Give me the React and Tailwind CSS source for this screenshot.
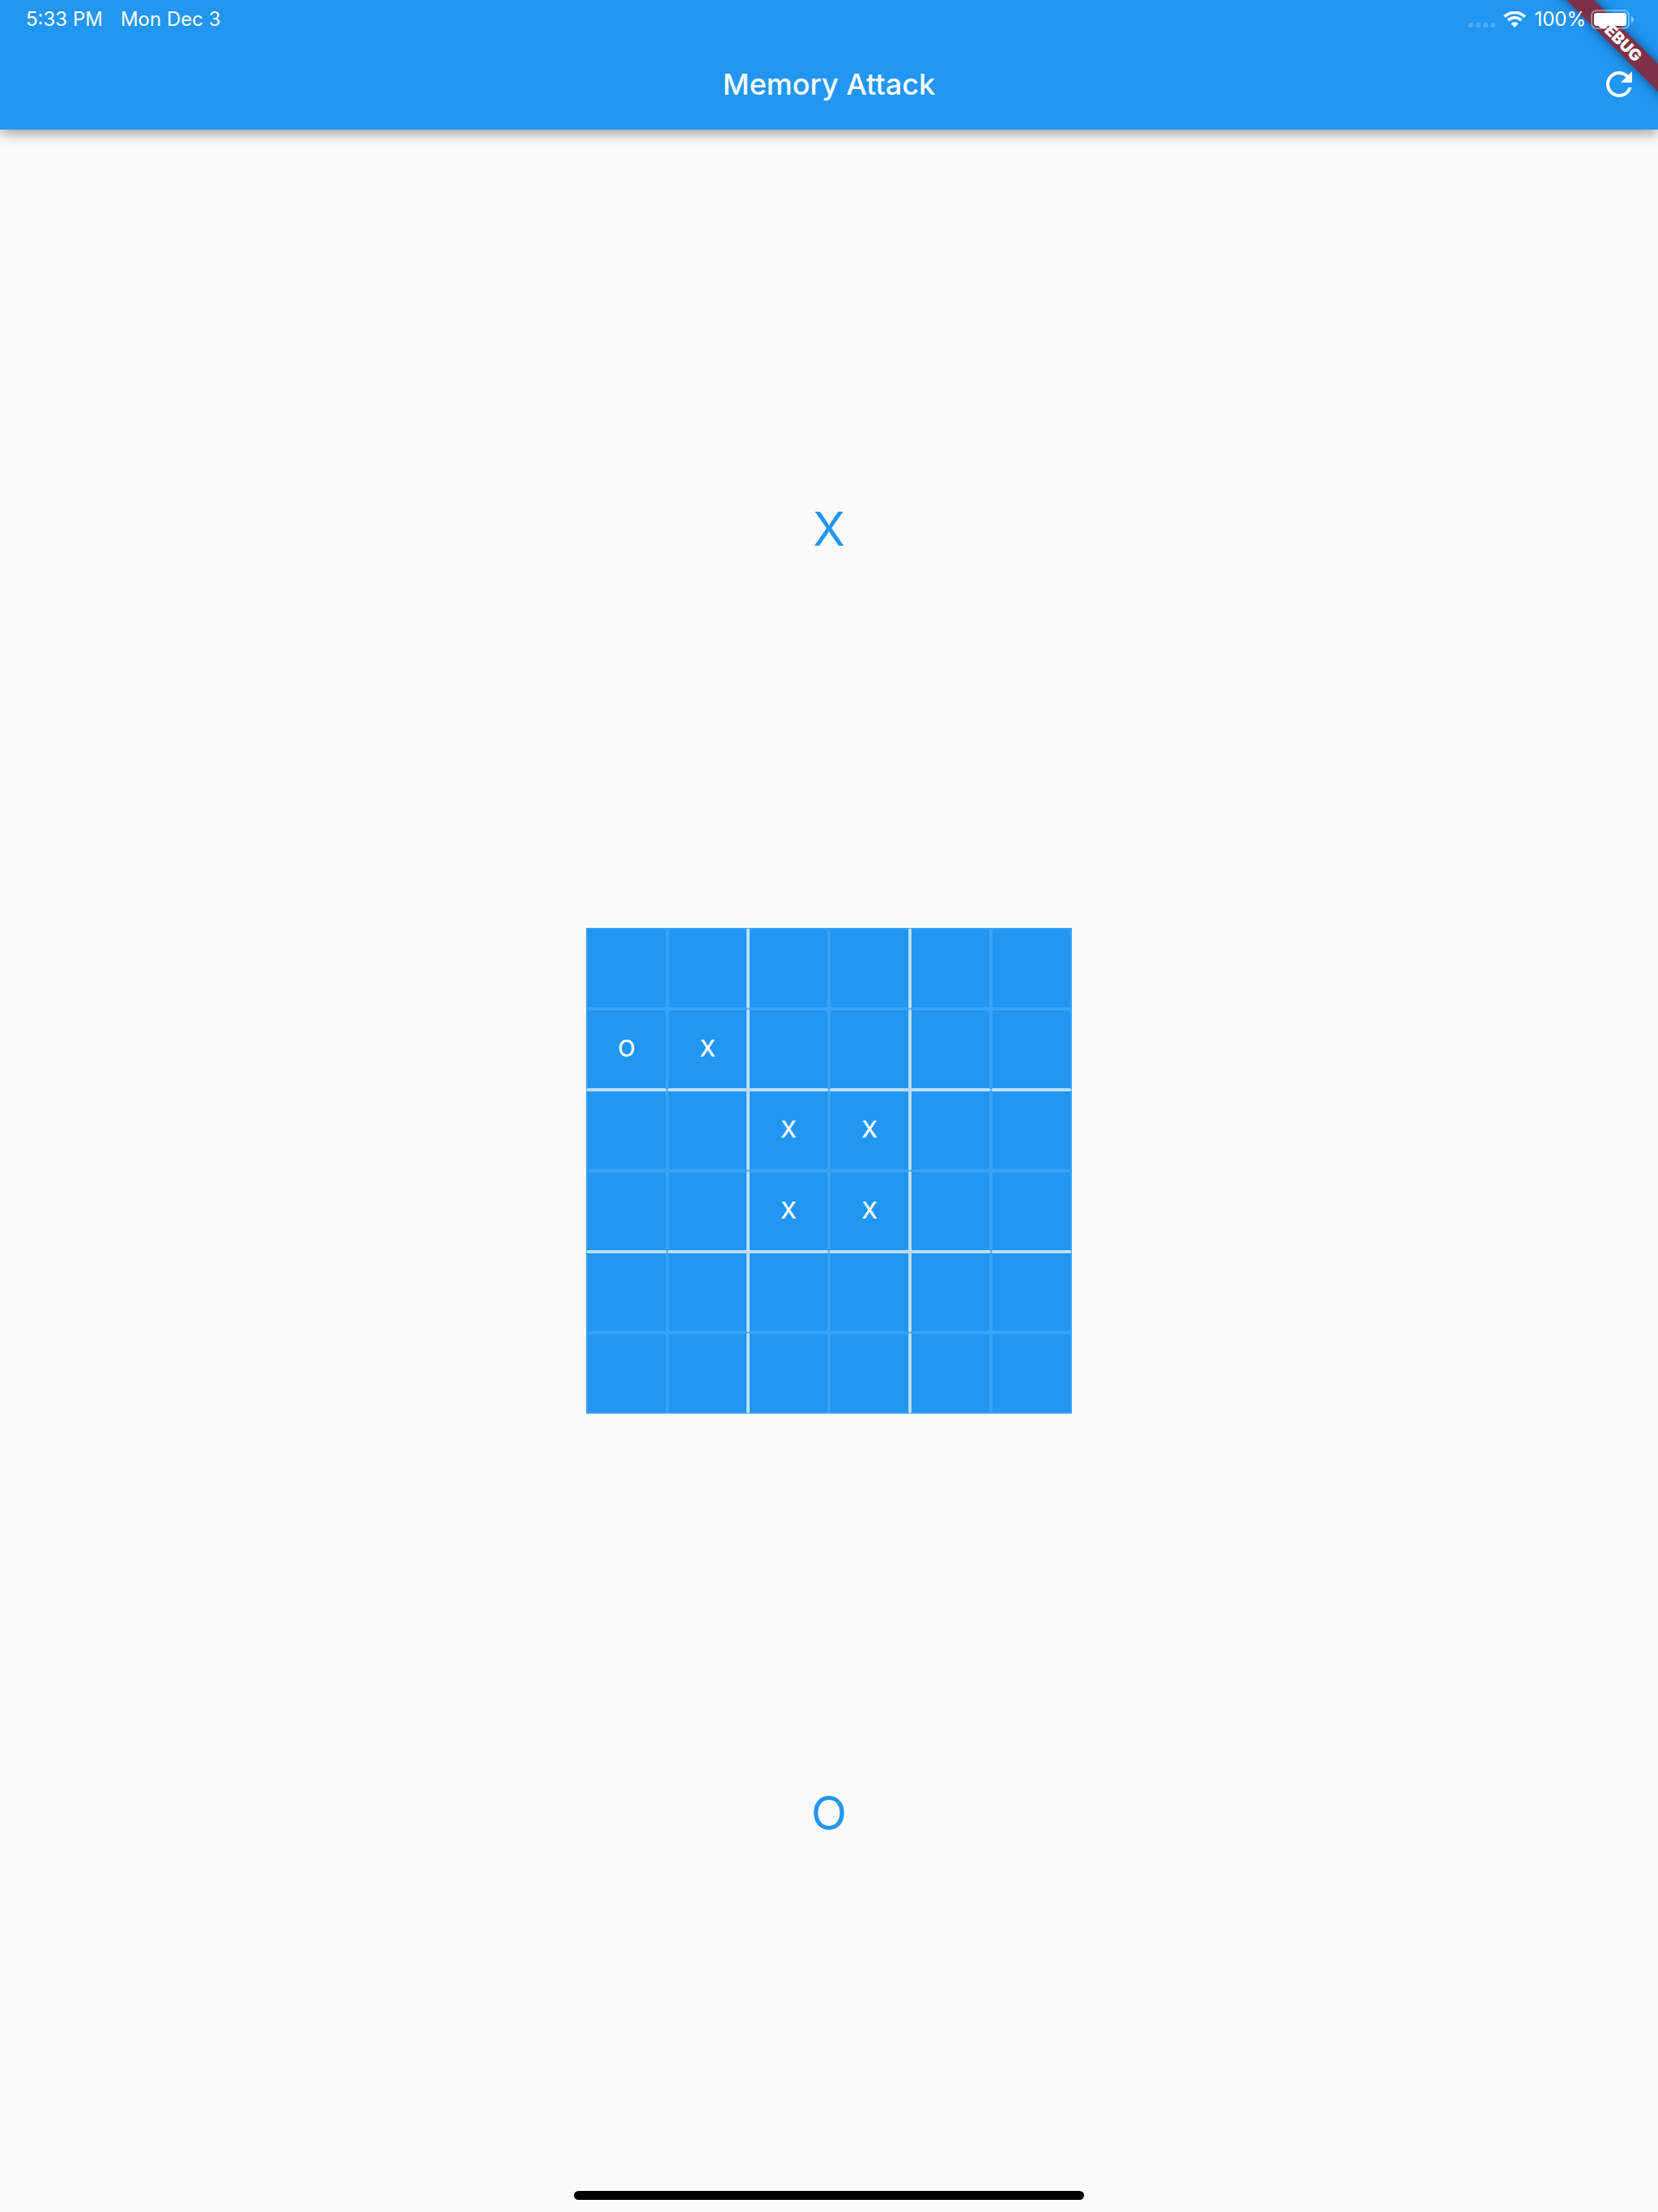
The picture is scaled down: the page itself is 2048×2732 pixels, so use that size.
import React from "react";

const CELLS = [
  ["", "", "", "", "", ""],
  ["O", "X", "", "", "", ""],
  ["", "", "X", "X", "", ""],
  ["", "", "X", "X", "", ""],
  ["", "", "", "", "", ""],
  ["", "", "", "", "", ""],
];

const STRONG = {
  top: "border-t-[#bbdefb]",
  bottom: "border-b-[#bbdefb]",
  left: "border-l-[#bbdefb]",
  right: "border-r-[#bbdefb]",
};

function cellBorders(row, col) {
  const edges = [];
  if (row === 2 || row === 4) edges.push(STRONG.top);
  if (row === 1 || row === 3) edges.push(STRONG.bottom);
  if (col === 2 || col === 4) edges.push(STRONG.left);
  if (col === 1 || col === 3) edges.push(STRONG.right);
  return edges.join(" ");
}

function WifiIcon() {
  return (
    <svg viewBox="0 0 28 20" className="h-5 w-7" fill="none" aria-hidden="true">
      <path d="M1.4 6.6 A18 18 0 0 1 26.6 6.6" stroke="white" strokeWidth="3.8" />
      <path d="M5.8 11.1 A11.7 11.7 0 0 1 22.2 11.1" stroke="white" strokeWidth="3.6" />
      <path d="M14 20 L9.4 15.2 A6.6 6.6 0 0 1 18.6 15.2 Z" fill="white" />
    </svg>
  );
}

function BatteryIcon() {
  return (
    <svg viewBox="0 0 54 24" className="h-6 w-[54px]" fill="none" aria-hidden="true">
      <rect x="1" y="1" width="46" height="22" rx="6" stroke="white" strokeOpacity="0.4" strokeWidth="2" />
      <rect x="4" y="4" width="40" height="16" rx="3" fill="white" />
      <path d="M50 8 C54 9.5 54 14.5 50 16 Z" fill="white" fillOpacity="0.45" />
    </svg>
  );
}

function StatusBar() {
  return (
    <div className="relative z-20 flex h-12 items-center justify-between pl-8 pr-[29px] text-2xl leading-6 text-white">
      <div className="flex gap-[22px]">
        <span>5:33 PM</span>
        <span>Mon Dec 3</span>
      </div>
      <div className="flex items-center">
        <div className="mr-2.5 mt-3.5 flex gap-[3px]">
          <i className="size-1.5 rounded-xs bg-white/20" />
          <i className="size-1.5 rounded-xs bg-white/20" />
          <i className="size-1.5 rounded-xs bg-white/20" />
          <i className="size-1.5 rounded-xs bg-white/20" />
        </div>
        <WifiIcon />
        <span className="ml-2.5 mr-1.5">100%</span>
        <BatteryIcon />
      </div>
    </div>
  );
}

function DebugBanner() {
  return (
    <div className="pointer-events-none absolute right-0 top-0 z-10 size-[160px] overflow-hidden">
      <div className="absolute -right-12 top-9 flex h-6 w-48 rotate-45 items-center justify-center bg-[#7d3046] text-[20px] font-black text-white shadow-[0_0_14px_rgba(0,0,0,0.5)]">
        DEBUG
      </div>
    </div>
  );
}

function Player({ name }) {
  return (
    <section className="flex flex-1 items-center justify-center text-[58px] leading-[72px] text-[#2196f3]">
      {name}
    </section>
  );
}

export default function App() {
  return (
    <div className="relative flex min-h-screen flex-col overflow-hidden bg-[#fafafa] font-['Inter',sans-serif]">
      <header className="bg-[#2196f3] shadow-[0_4px_16px_rgba(0,0,0,0.4)]">
        <StatusBar />
        <div className="grid h-28 grid-cols-[1fr_auto_1fr] items-center px-6">
          <h1 className="col-start-2 text-4xl font-medium text-white">Memory Attack</h1>
          <button type="button" aria-label="Restart" className="justify-self-end">
            <svg viewBox="0 0 24 24" className="size-12 fill-white" aria-hidden="true">
              <path d="M17.65 6.35A7.958 7.958 0 0 0 12 4a8 8 0 1 0 7.73 10h-2.08A5.99 5.99 0 0 1 12 18c-3.31 0-6-2.69-6-6s2.69-6 6-6c1.66 0 3.14.69 4.22 1.78L13 11h7V4l-2.35 2.35z" />
            </svg>
          </button>
        </div>
      </header>
      <DebugBanner />
      <main className="flex flex-1 flex-col items-center">
        <Player name="X" />
        <div className="grid grid-cols-6 bg-[#2196f3]">
          {CELLS.map((row, r) =>
            row.map((mark, c) => (
              <button
                key={`${r}-${c}`}
                type="button"
                aria-label={`Row ${r + 1}, column ${c + 1}${mark ? `, ${mark}` : ""}`}
                className={`size-[100px] border-2 border-[#3ba2f4] pb-0.5 text-[28px] font-medium text-white ${cellBorders(r, c)}`}
              >
                {mark}
              </button>
            ))
          )}
        </div>
        <Player name="O" />
      </main>
      <div className="absolute bottom-[15px] left-1/2 h-[11px] w-[630px] -translate-x-1/2 rounded-full bg-black" />
    </div>
  );
}
